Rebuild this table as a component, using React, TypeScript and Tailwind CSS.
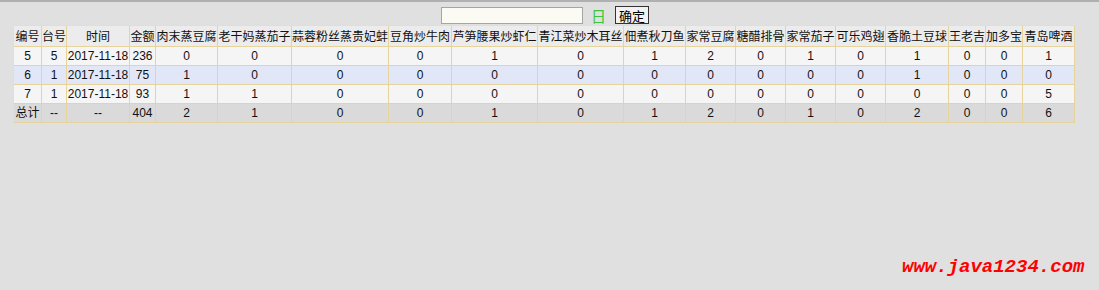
import React from "react";

const headers = [
  "编号", "台号", "时间", "金额", "肉末蒸豆腐", "老干妈蒸茄子", "蒜蓉粉丝蒸贵妃蚌", "豆角炒牛肉",
  "芦笋腰果炒虾仁", "青江菜炒木耳丝", "佃煮秋刀鱼", "家常豆腐", "糖醋排骨", "家常茄子",
  "可乐鸡翅", "香脆土豆球", "王老吉", "加多宝", "青岛啤酒",
];

const rows: { bg: string; cells: string[] }[] = [
  { bg: "bg-[#f5f5f5]", cells: ["5", "5", "2017-11-18", "236", "0", "0", "0", "0", "1", "0", "1", "2", "0", "1", "0", "1", "0", "0", "1"] },
  { bg: "bg-[#e2e7f7]", cells: ["6", "1", "2017-11-18", "75", "1", "0", "0", "0", "0", "0", "0", "0", "0", "0", "0", "1", "0", "0", "0"] },
  { bg: "bg-[#f5f5f5]", cells: ["7", "1", "2017-11-18", "93", "1", "1", "0", "0", "0", "0", "0", "0", "0", "0", "0", "0", "0", "0", "5"] },
  { bg: "bg-[#dadada]", cells: ["总计", "--", "--", "404", "2", "1", "0", "0", "1", "0", "1", "2", "0", "1", "0", "2", "0", "0", "6"] },
];

export default function App() {
  return (
    <div className="relative w-[1099px] h-[290px] bg-[#e0e0e0] border-t-2 border-[#b0b0b0] overflow-hidden font-['Liberation_Sans','Noto_Sans_CJK_SC',sans-serif]">
      <div className="w-[1090px] pt-[4px] flex justify-center">
        <div className="flex items-center h-[18px]">
          <div className="w-[142px] h-[17px] border border-[#a5a5a5] bg-[#fbfbf4]" />
          <span className="ml-[8px] text-[15px] leading-none text-[#3cc43c] font-['Noto_Sans_CJK_SC',sans-serif]">日</span>
          <button className="ml-[9px] h-[18px] w-[34px] border border-[#333] bg-[#f2f2f2] text-[13px] leading-none text-black flex items-center justify-center font-['Noto_Sans_CJK_SC',sans-serif]">确定</button>
        </div>
      </div>
      <div className="pl-[13px]">
        <div className="inline-grid border-l border-t border-[#eedfae] grid-cols-[28px_25px_63px_26px_62px_74px_97px_63px_86px_86px_62px_50px_50px_50px_50px_63px_37px_37px_52px]">
          {headers.map((h) => (
            <div key={h} className="h-[21px] bg-[#ececec] border-r border-b border-[#e6d49c] flex items-center justify-center text-[12px] text-[#111] whitespace-nowrap overflow-hidden font-['Noto_Sans_CJK_SC',sans-serif]">{h}</div>
          ))}
          {rows.map((r, ri) =>
            r.cells.map((c, ci) => (
              <div key={ri + "-" + ci} className={`h-[19px] ${r.bg} border-r border-b border-[#e6d49c] flex items-center justify-center text-[12px] text-[#111] whitespace-nowrap overflow-hidden`}>{c}</div>
            ))
          )}
        </div>
      </div>
      <div className="absolute left-[902px] top-[256px] text-[19px] font-bold italic text-[#ff0000] leading-none font-['Liberation_Mono',monospace]">www.java1234.com</div>
    </div>
  );
}
